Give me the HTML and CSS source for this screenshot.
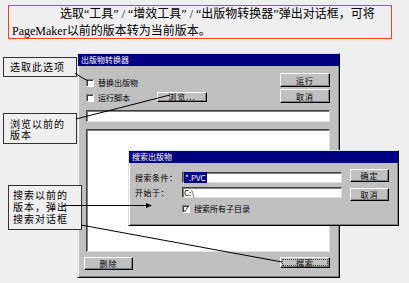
FILE: index.html
```html
<!DOCTYPE html>
<html lang="zh-CN">
    <head>
        <meta charset="UTF-8">
        <meta name="viewport" content="width=device-width, initial-scale=1.0">
        <title>出版物转换器</title>
        <link rel="stylesheet" href="styles.css">
    </head>
    <body>

        <div class="caption">选取“工具” / “增效工具” / “出版物转换器”弹出对话框，可将PageMaker以前的版本转为当前版本。</div>

        <div class="dialog converter">
            <div class="titlebar">出版物转换器</div>
            <div class="converter-body">
                <div class="top-row">
                    <div class="options">
                        <div class="check-row"><span class="check"></span>替换出版物</div>
                        <div class="check-row"><span class="check"></span>运行脚本<span class="btn browse">浏览...</span></div>
                    </div>
                    <div class="side-buttons">
                        <span class="btn">运行</span>
                        <span class="btn">取消</span>
                    </div>
                </div>
                <div class="field wide"></div>
                <div class="listbox"></div>
                <div class="bottom-row">
                    <span class="btn delete">删除</span>
                    <span class="btn focused">搜索</span>
                </div>
            </div>
        </div>

        <div class="dialog search">
            <div class="titlebar">搜索出版物</div>
            <div class="search-body">
                <div class="search-fields">
                    <div class="field-row">
                        <span class="label">搜索条件：</span>
                        <span class="field"><span class="selected">*.PVC</span></span>
                    </div>
                    <div class="field-row">
                        <span class="label">开始于：</span>
                        <span class="field">C:\</span>
                    </div>
                    <div class="check-row sub">
                        <span class="check checked">✓</span>搜索所有子目录
                    </div>
                </div>
                <div class="search-buttons">
                    <span class="btn">确定</span>
                    <span class="btn">取消</span>
                </div>
            </div>
        </div>

        <div class="callout c1">选取此选项</div>
        <div class="callout c2">浏览以前的<br>版本</div>
        <div class="callout c3">搜索以前的<br>版本，弹出<br>搜索对话框</div>

        <svg class="leaders" width="409" height="283" viewBox="0 0 409 283">
            <line x1="75" y1="73.5" x2="88" y2="81"/>
            <line x1="76" y1="119" x2="170" y2="95"/>
            <line x1="63" y1="205.5" x2="146" y2="205.5"/>
            <polygon points="146,203 152,205.5 146,208"/>
            <line x1="81" y1="225" x2="282" y2="262"/>
        </svg>

    </body>
</html>
```

FILE: styles.css
```css
body {
    margin: 0;
    width: 409px;
    height: 283px;
    background-color: #efefef;
    font-family: "Noto Sans CJK SC", sans-serif;
    color: #000;
    overflow: hidden;
}

.caption {
    box-sizing: border-box;
    width: 384px;
    height: 34px;
    margin: 5px 0 0 8px;
    padding: 0 0 0 3px;
    border: 1px solid #f2441d;
    font-family: "Liberation Serif", "Noto Sans CJK SC", serif;
    font-size: 12px;
    line-height: 17px;
    text-indent: 48px;
}

/* windows */
.dialog {
    box-sizing: border-box;
    background-color: #c0c0c0;
    border: 1px solid;
    border-color: #dfdfdf #000 #000 #dfdfdf;
    box-shadow: inset 1px 1px 0 #fff, inset -1px -1px 0 #808080;
    font-size: 8px;
}

.titlebar {
    height: 12px;
    padding-left: 3px;
    background-color: #000080;
    color: #fff;
    line-height: 12px;
    font-size: 8px;
}

.converter {
    width: 263px;
    height: 225px;
    margin: 14px 0 0 77px;
}

.converter-body {
    display: flex;
    flex-direction: column;
    padding: 0 9px 0 8px;
}

.top-row {
    display: flex;
    justify-content: space-between;
    margin-top: 7px;
    height: 30px;
}

.options {
    display: flex;
    flex-direction: column;
    gap: 7px;
    width: 121px;
    padding-top: 6px;
}

.check-row {
    display: flex;
    align-items: center;
    height: 8px;
    line-height: 8px;
    white-space: nowrap;
}

.check {
    box-sizing: border-box;
    width: 8px;
    height: 8px;
    margin-right: 4px;
    background-color: #fff;
    border: 1px solid;
    border-color: #808080 #fff #fff #808080;
    box-shadow: inset 1px 1px 0 #404040;
    font-size: 7px;
    line-height: 6px;
    text-align: center;
}

.btn {
    box-sizing: border-box;
    display: flex;
    align-items: center;
    justify-content: center;
    width: 50px;
    height: 14px;
    background-color: #c0c0c0;
    border: 1px solid;
    border-color: #fff #000 #000 #fff;
    box-shadow: inset -1px -1px 0 #808080;
    font-size: 8px;
    letter-spacing: 1px;
    color: #000;
}

.browse {
    height: 10px;
    margin-left: auto;
    margin-top: -3px;
}

.side-buttons {
    display: flex;
    flex-direction: column;
    gap: 2px;
}

.field {
    box-sizing: border-box;
    display: block;
    height: 12px;
    background-color: #fff;
    border: 1px solid;
    border-color: #404040 #dfdfdf #dfdfdf #404040;
    box-shadow: inset 1px 1px 0 #808080;
    padding-left: 1px;
    font-size: 8px;
    line-height: 9px;
}

.wide {
    margin-top: 7px;
}

.listbox {
    box-sizing: border-box;
    height: 123px;
    margin-top: 7px;
    background-color: #fff;
    border: 1px solid;
    border-color: #404040 #dfdfdf #dfdfdf #404040;
    box-shadow: inset 1px 1px 0 #808080;
}

.bottom-row {
    display: flex;
    justify-content: space-between;
    margin-top: 5px;
}

.delete {
    width: 49px;
    height: 13px;
    margin-left: -2px;
}

.focused {
    height: 11px;
    outline: 1px dotted #404040;
    outline-offset: -3px;
}

/* search window, floating over the converter */
.search {
    position: absolute;
    left: 128px;
    top: 150px;
    width: 271px;
    height: 76px;
}

.search-body {
    display: flex;
    padding: 0 9px 0 6px;
}

.search-fields {
    display: flex;
    flex-direction: column;
    gap: 4px;
    padding-top: 9px;
    width: 207px;
}

.field-row {
    display: flex;
    align-items: center;
    height: 11px;
}

.label {
    width: 47px;
    letter-spacing: 0.5px;
    white-space: nowrap;
}

.field-row .field {
    width: 160px;
    height: 11px;
}

.selected {
    background-color: #000080;
    color: #fff;
    padding: 0 1px;
}

.sub {
    margin: 3px 0 0 47px;
}

.search-buttons {
    display: flex;
    flex-direction: column;
    gap: 6px;
    margin-left: auto;
    padding-top: 6px;
}

.search-buttons .btn {
    width: 39px;
    height: 13px;
}

/* callouts and leader lines */
.callout {
    position: absolute;
    box-sizing: border-box;
    width: 74px;
    background-color: #efefef;
    border: 1px solid #333;
    font-size: 10px;
    letter-spacing: 1px;
    white-space: nowrap;
}

.c1 {
    left: 3px;
    top: 57px;
    height: 20px;
    padding-left: 6px;
    line-height: 18px;
}

.c2 {
    left: 3px;
    top: 113px;
    height: 31px;
    padding: 4px 0 0 6px;
    line-height: 11px;
}

.c3 {
    left: 8px;
    top: 185px;
    height: 45px;
    padding: 3px 0 0 4px;
    line-height: 12px;
}

.leaders {
    position: absolute;
    left: 0;
    top: 0;
    pointer-events: none;
}

.leaders line {
    stroke: #000;
    stroke-width: 1;
}

.leaders polygon {
    fill: #000;
}
```
